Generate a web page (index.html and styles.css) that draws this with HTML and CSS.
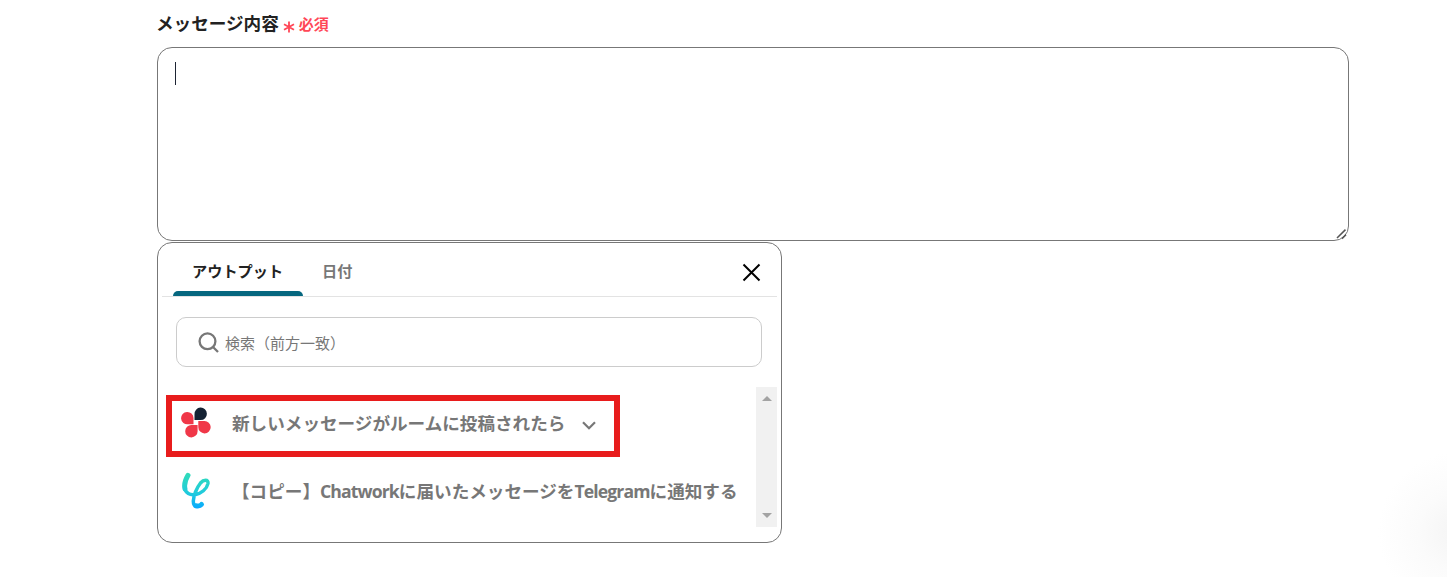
FILE: index.html
```html
<!DOCTYPE html>
<html lang="ja">
<head>
    <meta charset="UTF-8">
    <meta name="viewport" content="width=device-width, initial-scale=1.0">
    <title>メッセージ内容</title>
    <link rel="stylesheet" href="styles.css">
</head>
<body>
    <div class="field">
        <div class="field-label">
            <span class="label-text">メッセージ内容</span>
            <svg class="asterisk" width="12" height="12" viewBox="0 0 12 12"><path d="M6 .4v11.200M1 3.200l10 5.600M11 3.200L1 8.800"/></svg>
            <span class="required">必須</span>
        </div>

        <div class="message-box">
            <span class="caret"></span>
            <svg class="resize-grip" width="12" height="12" viewBox="0 0 12 12"><path d="M1 10L9.500 1.600M6 10.600l4-4"/></svg>
        </div>

        <div class="panel">
            <div class="tabs">
                <div class="tab active"><span>アウトプット</span></div>
                <div class="tab"><span>日付</span></div>
                <svg class="close" width="18" height="18" viewBox="0 0 18 18"><path d="M.5 1.500l16 16M16.500 1.500l-16 16"/></svg>
            </div>

            <div class="search">
                <svg width="21" height="21" viewBox="0 0 21 21"><circle cx="9.500" cy="9.300" r="7.900"/><path d="M15 15l5 5"/></svg>
                <span>検索（前方一致）</span>
            </div>

            <div class="list">
                <div class="items">
                    <div class="item">
                        <svg class="icon" width="32" height="32" viewBox="0 0 32 32">
                            <path fill="#142233" d="M13.500 13V7.200a6.200 6.200 0 1 1 6.200 5.800z"/>
                            <path fill="#f03748" d="M12.500 17.300H7a6.200 6.200 0 1 1 5.500-6.300z"/>
                            <path fill="#f03748" d="M17.300 14h6a6.200 6.200 0 1 1-6 6.200z"/>
                            <path fill="#f03748" d="M16.600 18v6.200A6.200 6.200 0 1 1 10.500 18z"/>
                        </svg>
                        <span class="item-text">新しいメッセージがルームに投稿されたら</span>
                        <svg class="chevron" width="14" height="9" viewBox="0 0 14 9"><path d="M1 1.200l6 6 6-6"/></svg>
                    </div>
                    <div class="item">
                        <svg class="icon" width="32" height="40" viewBox="0 0 32 40">
                            <defs>
                                <linearGradient id="flow" x1="0" y1="2" x2="0" y2="38" gradientUnits="userSpaceOnUse">
                                    <stop offset="0" stop-color="#31dcb8"/>
                                    <stop offset=".55" stop-color="#20cbdc"/>
                                    <stop offset="1" stop-color="#08a8ff"/>
                                </linearGradient>
                            </defs>
                            <path class="flow-thick" d="M7 4.300C4.500 8.500 3 14 4 18"/>
                            <path class="flow-line" d="M3.600 16C4.500 29 24.500 24 27 12.500c.6-4.500-4.500-4-7.500-.5C15.500 17 12.500 25 12.300 30c0 3.500 1.200 5 3.200 5"/>
                            <path class="flow-thick" d="M14.800 34.800c2.500.6 4.600 0 5.700-1.300"/>
                        </svg>
                        <span class="item-text">【コピー】<span class="latin">Chatwork</span>に届いたメッセージを<span class="latin">Telegram</span>に通知する</span>
                    </div>
                </div>
                <div class="scrollbar">
                    <span class="arrow up"></span>
                    <span class="arrow down"></span>
                </div>
            </div>
            <div class="highlight"></div>
        </div>
    </div>
</body>
</html>
```

FILE: styles.css
```css
* {
    box-sizing: border-box;
}

body {
    margin: 0;
    height: 577px;
    overflow: hidden;
    font-family: "Open Sans", "Noto Sans CJK JP", sans-serif;
    color: #222;
    background: radial-gradient(circle at 1458px 532px, #f4f4f4 0, #fbfbfb 40px, #fff 80px);
}

svg {
    fill: none;
    flex-shrink: 0;
}

.field {
    width: 1192px;
    margin-left: 157px;
}

.field-label {
    display: flex;
    align-items: center;
    height: 47px;
    padding-bottom: 2px;
    font-weight: bold;
}

.label-text {
    margin-left: -1px;
    font-size: 17.6px;
    line-height: 24px;
}

.asterisk {
    margin: 8px 4px 0;
    stroke: #ff4757;
    stroke-width: 1.8;
}

.required {
    font-size: 15px;
    line-height: 20px;
    margin-top: 2px;
    color: #ff4757;
}

.message-box {
    position: relative;
    height: 194px;
    padding: 14px 17px;
    border: 1px solid #777;
    border-radius: 15px;
    background: #fff;
}

.caret {
    display: block;
    width: 1px;
    height: 23px;
    background: #1d2433;
}

.resize-grip {
    position: absolute;
    right: 0;
    bottom: 0;
    stroke: #555;
    stroke-width: 1.5;
}

.panel {
    position: relative;
    width: 625px;
    height: 301px;
    margin-top: 1px;
    padding: 0 4px;
    border: 1px solid #777;
    border-radius: 15px;
    background: #fff;
}

.tabs {
    display: flex;
    height: 54px;
    padding-left: 11px;
    border-bottom: 1px solid #e3e3e3;
}

.tab {
    height: 53px;
    padding: 18px 19px 0;
    font-size: 15.2px;
    font-weight: bold;
    line-height: 20px;
    color: #777;
}

.tab.active {
    display: flex;
    flex-direction: column;
    justify-content: space-between;
    width: 130px;
    color: #222;
}

.tab.active::after {
    content: "";
    height: 5px;
    margin: 0 -19px;
    border-radius: 5px 5px 0 0;
    background: #06677f;
}

.close {
    margin: 20px 16px 0 auto;
    stroke: #000;
    stroke-width: 2;
    overflow: visible;
}

.search {
    display: flex;
    align-items: center;
    gap: 6px;
    height: 50px;
    margin: 20px 15px 0 14px;
    padding-left: 21px;
    border: 1px solid #ccc;
    border-radius: 10px;
    font-size: 15px;
    color: #777;
}

.search svg {
    stroke: #777;
    stroke-width: 2.3;
}

.list {
    display: flex;
    height: 140px;
    margin-top: 20px;
}

.items {
    flex: 1;
}

.item {
    display: flex;
    align-items: center;
    height: 68px;
    padding: 3px 0 0 19px;
}

.item-text {
    margin-left: 19px;
    font-size: 17.6px;
    font-weight: bold;
    line-height: 26px;
    white-space: nowrap;
    color: #777;
}

.latin {
    letter-spacing: -0.88px;
}

.chevron {
    margin: 5px 0 0 17px;
    stroke: #777;
    stroke-width: 2.2;
}

.flow-line {
    stroke: url(#flow);
    stroke-width: 3.5;
    stroke-linecap: round;
    stroke-linejoin: round;
}

.flow-thick {
    stroke: url(#flow);
    stroke-width: 5;
    stroke-linecap: round;
}

.scrollbar {
    display: flex;
    flex-direction: column;
    align-items: center;
    justify-content: space-between;
    width: 21px;
    padding: 9px 0;
    background: #f1f1f1;
}

.arrow {
    border: 5px solid transparent;
}

.arrow.up {
    border-top: 0;
    border-bottom-color: #a3a3a3;
}

.arrow.down {
    border-bottom: 0;
    border-top-color: #a3a3a3;
}

/* red frame over the first output */
.highlight {
    position: absolute;
    top: 152px;
    left: 8px;
    width: 454px;
    height: 62px;
    border: 6px solid #e81c1c;
}
```
